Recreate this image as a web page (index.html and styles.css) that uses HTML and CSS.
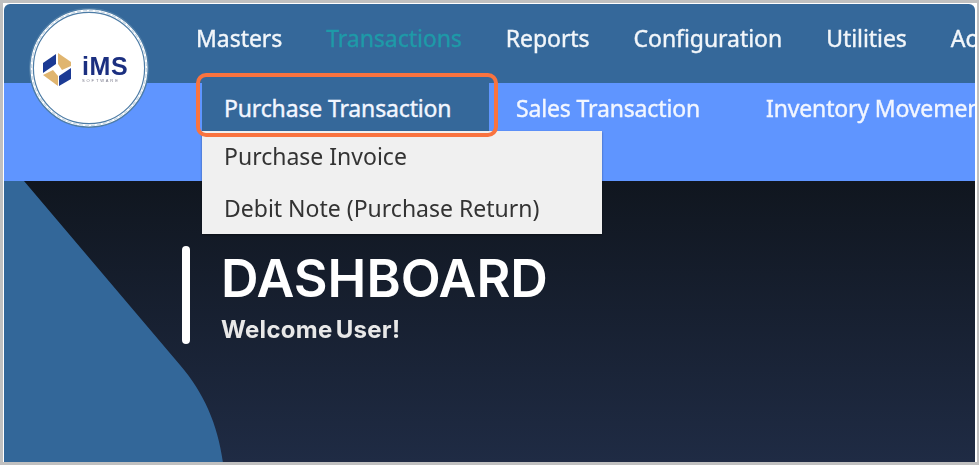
FILE: index.html
```html
<!DOCTYPE html>
<html lang="en">
<head>
    <meta charset="UTF-8">
    <meta name="viewport" content="width=device-width, initial-scale=1.0">
    <title>Dashboard</title>
    <link rel="stylesheet" href="styles.css">
</head>
<body>
    <div class="frame">
        <!-- Logo sits over both nav bars -->
        <div class="logo">
            <svg class="logo-art" viewBox="0 0 120 120" width="120" height="120">
                <circle cx="60" cy="60" r="59.2" fill="#fff" stroke="#4d7ca6" stroke-width="1.4"/>
                <circle cx="60" cy="60" r="57.4" fill="none" stroke="#c6d6e4" stroke-width="1.2" stroke-dasharray="4 2"/>
                <circle cx="60" cy="60" r="55.6" fill="#fff" stroke="#4d7ca6" stroke-width="1.2"/>
                <polygon points="14,55 27,46 27,56 14,65" fill="#1b3a94"/>
                <polygon points="29,45 42,54 42,58 33,62 29,56" fill="#e0b56f"/>
                <polygon points="14,67 24,62 29,68 29,78" fill="#e0b56f"/>
                <polygon points="30,78 30,68 42,60 42,71" fill="#1b3a94"/>
                <text class="logo-name" x="53" y="67">iMS</text>
                <text class="logo-sub" x="53" y="74">SOFTWARE</text>
            </svg>
        </div>

        <!-- Main nav -->
        <nav class="main-nav">
            <a class="main-link">Masters</a>
            <a class="main-link active">Transactions</a>
            <a class="main-link">Reports</a>
            <a class="main-link">Configuration</a>
            <a class="main-link">Utilities</a>
            <a class="main-link">Account</a>
        </nav>

        <!-- Sub nav -->
        <nav class="sub-nav">
            <div class="sub-item current">
                <a class="sub-link">Purchase Transaction</a>
                <div class="dropdown">
                    <a class="drop-link">Purchase Invoice</a>
                    <a class="drop-link">Debit Note (Purchase Return)</a>
                </div>
            </div>
            <a class="sub-link">Sales Transaction</a>
            <a class="sub-link">Inventory Movement</a>
        </nav>

        <!-- Dashboard area -->
        <main class="hero">
            <svg class="hero-shape" viewBox="0 0 224 282" width="224" height="282">
                <path d="M0 0 H20 L176 184 C200 212 214 244 219 282 H0 Z" fill="#336799"/>
            </svg>
            <div class="title-block">
                <div class="title-bar"></div>
                <div>
                    <h1 class="title">DASHBOARD</h1>
                    <div class="welcome">Welcome User!</div>
                </div>
            </div>
        </main>
    </div>
</body>
</html>
```

FILE: styles.css
```css
html, body { height: 100%; }
body {
    margin: 0;
    padding: 1px 0 0 1px;
    box-sizing: border-box;
    border: solid #c0c0c0;
    border-width: 3px 2px 3px 3px;
    background: #fff;
    font-family: "Noto Sans", sans-serif;
    overflow: hidden;
}

.frame {
    position: relative;
    display: flex;
    flex-direction: column;
    width: 971px;
    height: 458px;
    border-radius: 6px 6px 0 0;
    overflow: hidden;
    filter: blur(0.7px);
}

.logo { position: absolute; left: 25px; top: 4px; z-index: 3; }
.logo-art { display: block; }
.logo-name { font-family: "Liberation Sans", sans-serif; font-size: 25px; font-weight: 700; fill: #1b2f80; letter-spacing: 0.6px; }
.logo-sub { font-family: "Liberation Sans", sans-serif; font-size: 4px; fill: #778; letter-spacing: 1.9px; }

.main-nav {
    display: flex;
    flex: none;
    align-items: center;
    gap: 44px;
    height: 79px;
    padding: 0 0 12px 192px;
    box-sizing: border-box;
    background: #35689a;
    white-space: nowrap;
}
.main-link { flex: none; font-size: 23px; letter-spacing: -0.05px; -webkit-text-stroke: 0.4px currentColor; color: #f2f6fa; }
.main-link.active { color: #1f9aa8; }

.sub-nav {
    display: flex;
    flex: none;
    align-items: flex-start;
    height: 98px;
    padding-left: 198px;
    box-sizing: border-box;
    background: #5f95ff;
    white-space: nowrap;
}
.sub-link { display: block; flex: none; margin-top: 9px; margin-right: 66px; font-size: 23px; letter-spacing: -0.15px; -webkit-text-stroke: 0.4px currentColor; color: #f2f6ff; }

.sub-item { position: relative; flex: none; margin-right: 27px; width: 287px; height: 48px; box-sizing: border-box; padding-left: 22px; background: #35689a; }
.sub-item .sub-link { margin-right: 0; }
.sub-item.current::after {
    content: "";
    position: absolute;
    left: -6px;
    top: -10px;
    width: 302px;
    height: 64px;
    box-sizing: border-box;
    border: 4px solid #f9733f;
    border-radius: 10px;
    z-index: 2;
}

.dropdown {
    position: absolute;
    left: 0;
    top: 48px;
    width: 400px;
    height: 103px;
    display: flex;
    flex-direction: column;
    background: #f0f0f0;
    z-index: 1;
    box-shadow: 0 1px 2px rgba(0, 0, 0, 0.4);
}
.drop-link { height: 51.5px; padding-left: 22px; font-size: 23px; line-height: 51px; color: #333; }

.hero {
    position: relative;
    flex: 1;
    background: linear-gradient(#10161f, #1f2b44);
}
.hero-shape { position: absolute; left: 0; top: 0; }

.title-block {
    position: relative;
    display: flex;
    gap: 31px;
    margin: 65px 0 0 178px;
    color: #fff;
}
.title-bar { flex: none; width: 8px; height: 98px; border-radius: 4px; background: #fff; }
.title { margin: 2px 0 0; font-family: "Inter", sans-serif; font-size: 52px; line-height: 62px; font-weight: 600; white-space: nowrap; }
.welcome { margin-top: 5px; font-family: "Inter", sans-serif; font-size: 24px; line-height: 30px; font-weight: 700; letter-spacing: 0.3px; word-spacing: -3px; color: #e8e8e8; }
```
